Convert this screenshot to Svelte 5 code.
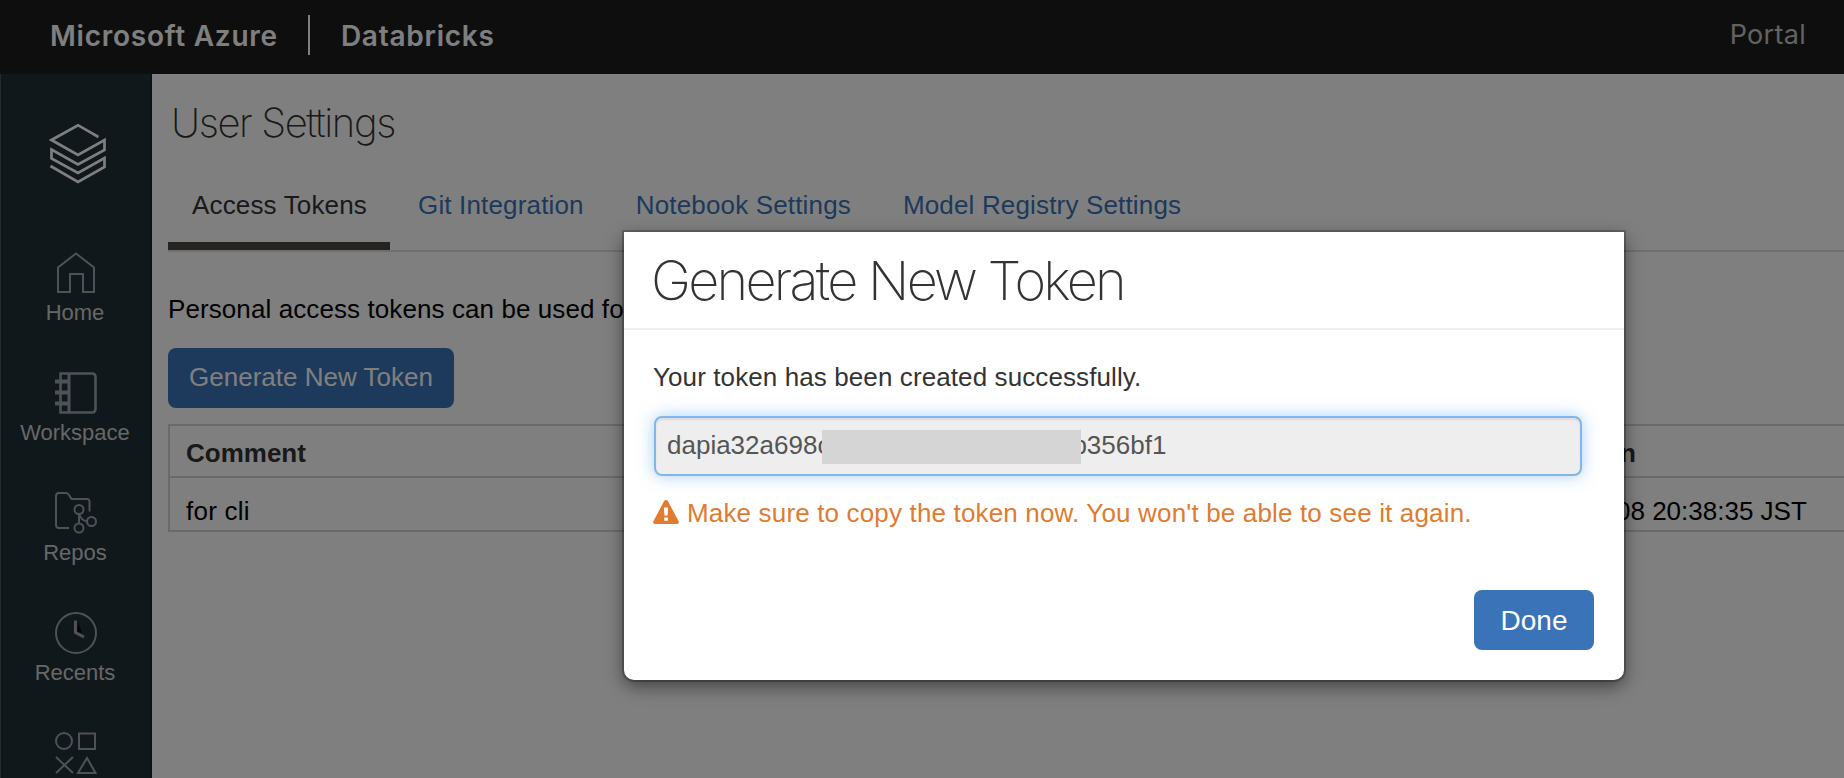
<script>
  const nav = ['Home', 'Workspace', 'Repos', 'Recents', ''];
  const tabs = ['Access Tokens', 'Git Integration', 'Notebook Settings', 'Model Registry Settings'];
</script>

<div class="app">
  <header class="topbar">
    <span class="brand">Microsoft Azure</span>
    <span class="sep"></span>
    <span class="product">Databricks</span>
    <span class="portal">Portal</span>
  </header>
  <div class="body">
    <nav class="sidebar">
      <svg class="logo" viewBox="0 0 58 62" fill="none" stroke="#fff" stroke-width="2.7">
        <path d="M49.500 14 29 2.200 2.500 17 29 32 55.500 17V27L29 41.500 2.500 26.500V35.500L29 50 55.500 35V44L29 59 1.500 43" />
      </svg>
      {#each nav as label, i}
        <div class="item">
          <svg class="icon" viewBox="0 0 42 42" fill="none" stroke="currentColor" stroke-width="2">
            {#if i === 0}
              <path d="M21 1.500 39 15.500V40H28V22H15V40H3V15.500Z" />
            {:else if i === 1}
              <path stroke-width="2.600" d="M5.500 1.500H37Q40.500 1.500 40.500 5V37Q40.500 40.500 37 40.500H5.500Z" />
              <path stroke-width="3" d="M14 1V41" />
              <path stroke-width="4" d="M0 9.500H15M0 20.500H15M0 31.500H15" />
            {:else if i === 2}
              <path d="M14 36H4Q1 36 1 33V4Q1 1 4 1H11Q13 1 14 3L16.500 7H32Q34.500 7 34.500 9.500V19.500" />
              <circle cx="24" cy="17.500" r="4.500" />
              <circle cx="24" cy="36" r="4.500" />
              <circle cx="36.500" cy="29.500" r="4.500" />
              <path d="M24 22V31M24 22Q26 28 32 29.500" />
            {:else if i === 3}
              <circle cx="21" cy="21" r="20" />
              <path fill="#05090a" stroke="none" d="M23 10 27 21 22 20Z" />
              <path stroke-width="3" d="M20.500 8.500V20.500L29 25" />
            {:else}
              <circle cx="9" cy="9" r="8" />
              <rect x="24" y="1.500" width="16" height="15.500" />
              <path d="M1 25 18 41M18 25 1 41M32 26 40.500 41H23Z" />
            {/if}
          </svg>
          <span>{label}</span>
        </div>
      {/each}
    </nav>
    <main>
      <h1>User Settings</h1>
      <div class="tabs">
        {#each tabs as tab, i}
          <a class:active={i === 0}>{tab}</a>
        {/each}
      </div>
      <p class="intro">Personal access tokens can be used fo</p>
      <button class="generate">Generate New Token</button>
      <div class="table">
        <div class="row head"><span>Comment</span><span class="exp">n</span></div>
        <div class="row"><span class="comment">for cli</span><span>08 20:38:35 JST</span></div>
      </div>
    </main>
  </div>
  <div class="backdrop">
    <section class="modal">
      <h2>Generate New Token</h2>
      <div class="content">
        <p>Your token has been created successfully.</p>
        <div class="field"><span>dapia32a698c</span><i></i><span>b356bf1</span></div>
        <div class="warning">
          <svg viewBox="0 0 26 24"><path fill="#e07b30" fill-rule="evenodd" d="M13 0Q14.200 0 15 1.300L25.600 21.300Q26.500 24 24 24H2Q-.5 24 .4 21.300L11 1.300Q11.800 0 13 0ZM10.900 7.500 11.400 15.500H14.600L15.100 7.500ZM11.200 17.500V20.800H14.800V17.500Z" /></svg>
          <span>Make sure to copy the token now. You won't be able to see it again.</span>
        </div>
      </div>
      <footer><button class="done">Done</button></footer>
    </section>
  </div>
</div>

<style>
  :global(body) { margin: 0; }
  .app {
    position: relative;
    width: 1844px;
    height: 778px;
    overflow: hidden;
    display: flex;
    flex-direction: column;
    background: #fff;
    color: #000;
    font: 26px/40px "Liberation Sans", Arial, sans-serif;
  }
  .topbar {
    box-sizing: border-box;
    height: 74px;
    flex: none;
    display: flex;
    align-items: center;
    padding: 0 38px 4px 50px;
    background: #1c1c1c;
    color: #fff;
    font-family: Inter, sans-serif;
    font-size: 28px;
    font-weight: 600;
  }
  .brand, .product { padding-top: 1px; letter-spacing: 0.75px; }
  .sep { width: 2px; height: 40px; margin: 0 31px 0 30px; background: #fff; }
  .portal { margin-left: auto; font-weight: 400; color: #c4c4c4; font-size: 27px; letter-spacing: 0.3px; }
  .body { flex: 1; display: flex; min-height: 0; }
  .sidebar {
    box-sizing: border-box;
    width: 152px;
    flex: none;
    display: flex;
    flex-direction: column;
    background: #203036;
    border-right: 2px solid #17222a;
    border-left: 1px solid #45545a;
  }
  .logo { width: 58px; height: 62px; flex: none; margin: 49px 0 67px 48px; }
  .item {
    height: 120px;
    flex: none;
    display: flex;
    flex-direction: column;
    align-items: center;
    color: #cecece;
    font-size: 22px;
    line-height: 26px;
  }
  .icon { width: 42px; height: 42px; color: #9fa2b4; margin: 0 0 6px; }
  .item span { margin-left: -1px; }
  main { flex: 1; min-width: 0; padding: 0 0 0 16px; }
  h1 {
    margin: 24px 0 0 3px;
    font: 200 40px/50px Inter, sans-serif;
    letter-spacing: -1.4px;
    color: #333;
  }
  .tabs { display: flex; gap: 4px; height: 102px; border-bottom: 2px solid #ddd; letter-spacing: 0.16px; }
  .tabs a { box-sizing: border-box; padding: 37px 24px 0; color: #3a73b7; white-space: nowrap; }
  .tabs .active { width: 222px; color: #333; border-bottom: 8px solid #484743; }
  .intro { margin: 37px 0 19px; letter-spacing: 0.09px; }
  button { border: 0; color: #fff; background: #3a73b7; border-radius: 8px; font: inherit; }
  .generate { display: block; width: 286px; height: 60px; padding: 0 0 2px; }
  .table { margin-top: 16px; border: 2px solid #d5d5d5; border-right: 0; }
  .row { box-sizing: border-box; height: 52px; display: grid; grid-template-columns: 1430px 1fr; padding: 13px 0 0 16px; }
  .head { height: 54px; border-bottom: 2px solid #d5d5d5; font-weight: 700; color: #333; padding-top: 7px; }
  .head + .row { height: 54px; }
  .head { height: 52px; }
  .table .row:last-child { height: 52px; }
  .comment { letter-spacing: 0.25px; }
  .exp { padding-left: 4px; }
  .backdrop { position: absolute; inset: 0; background: rgba(0, 0, 0, 0.5); }
  .modal {
    box-sizing: border-box;
    width: 1000px;
    height: 448px;
    margin: 232px 0 0 624px;
    background: #fff;
    color: #333;
    border-radius: 0 0 10px 10px;
    box-shadow: 0 0 0 2px rgba(0, 0, 0, 0.22), 0 6px 18px rgba(0, 0, 0, 0.5);
  }
  h2 {
    box-sizing: border-box;
    height: 98px;
    margin: 0;
    padding: 14px 0 0 27px;
    border-bottom: 2px solid #eee;
    font: 200 54px/70px Inter, sans-serif;
    letter-spacing: -2.75px;
  }
  .content { padding: 27px 42px 0 30px; }
  p { margin: 0; }
  .content p { margin-left: -1px; letter-spacing: 0.1px; }
  .field {
    box-sizing: border-box;
    height: 60px;
    margin: 19px 0 17px;
    padding: 7px 11px;
    display: flex;
    border: 2px solid #80b6ec;
    border-radius: 8px;
    background: #eee;
    color: #555;
    box-shadow: inset 0 2px 2px rgba(0, 0, 0, 0.075), 0 0 16px rgba(82, 160, 236, 0.5);
  }
  .field i { position: relative; width: 259px; height: 34px; margin: 5px -9px 0 -8px; background: #d5d5d5; }
  .warning { display: flex; gap: 8px; color: #e07b30; white-space: nowrap; letter-spacing: 0.16px; }
  .warning svg { width: 26px; height: 24px; margin: 7px 0 0 -1px; }
  footer { display: flex; justify-content: flex-end; padding: 57px 30px 0 0; }
  .done { width: 120px; height: 60px; padding: 1px 0 0; font-size: 28px; }
</style>
